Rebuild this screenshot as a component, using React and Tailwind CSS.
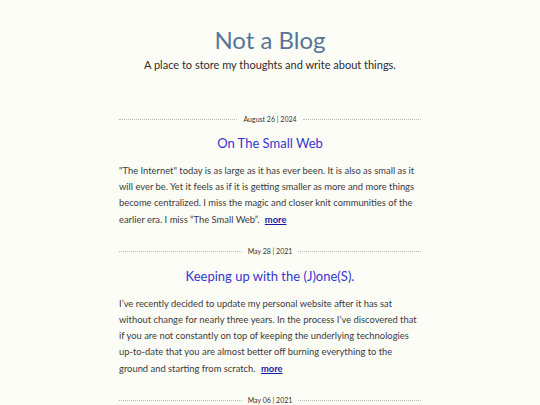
import React from "react";

const posts = [
  {
    date: "August 26 | 2024",
    title: "On The Small Web",
    body: "\"The Internet\" today is as large as it has ever been. It is also as small as it will ever be. Yet it feels as if it is getting smaller as more and more things become centralized. I miss the magic and closer knit communities of the earlier era. I miss \u201cThe Small Web\u201d.",
  },
  {
    date: "May 28 | 2021",
    title: "Keeping up with the (J)one(S).",
    body: "I\u2019ve recently decided to update my personal website after it has sat without change for nearly three years. In the process I\u2019ve discovered that if you are not constantly on top of keeping the underlying technologies up-to-date that you are almost better off burning everything to the ground and starting from scratch.",
  },
  {
    date: "May 06 | 2021",
    title: "",
    body: "",
  },
];

const DateRule = ({ date }) => (
  <div className="flex items-center gap-[6px] h-2">
    <div className="flex-1 border-t border-dotted border-[#b9b9b2]" />
    <span className="text-[7px] text-[#333] leading-none">{date}</span>
    <div className="flex-1 border-t border-dotted border-[#b9b9b2]" />
  </div>
);

export default function App() {
  return (
    <div
      className="min-h-screen bg-[#fdfdf7] text-[#333]"
      style={{ fontFamily: "Lato, 'Open Sans', sans-serif" }}
    >
      <header className="pt-[26px] text-center">
        <h1 className="text-[24px] leading-[28px] font-normal text-[#567596]">
          Not a Blog
        </h1>
        <p className="text-[11px] leading-[14px] mt-[4px] text-[#2b2b2b]">
          A place to store my thoughts and write about things.
        </p>
      </header>

      <main className="w-[302px] mx-auto mt-[43px]">
        {posts.map((post) => (
          <article key={post.date} className="mb-[20px]">
            <DateRule date={post.date} />
            {post.title && (
              <h2 className="text-center text-[13px] leading-[18px] text-[#3535d0] mt-[11px]">
                {post.title}
              </h2>
            )}
            {post.body && (
              <p className="text-[9.4px] leading-[16.2px] mt-[11px] text-[#3a3a3a]">
                {post.body}{" "}
                <a href="#" className="ml-[3px] font-bold text-[#1a1aa8] underline">
                  more
                </a>
              </p>
            )}
          </article>
        ))}
      </main>
    </div>
  );
}
